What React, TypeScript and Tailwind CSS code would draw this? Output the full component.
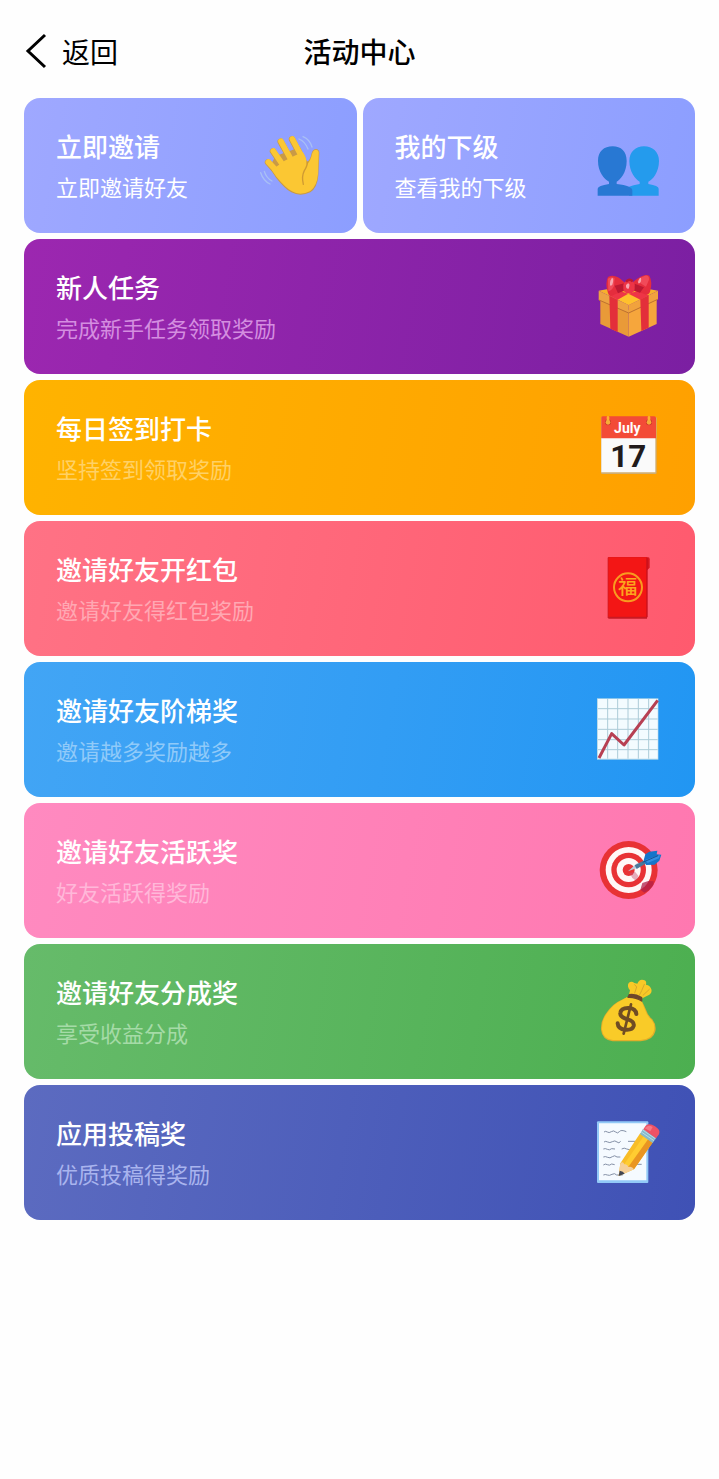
import type { ReactNode } from "react";

function Icon({ box, children }: { box: string; children: ReactNode }) {
  return (
    <svg viewBox={box} className="size-[72px] shrink-0 overflow-visible" aria-hidden="true">
      {children}
    </svg>
  );
}

const wave = (
  <Icon box="15 14 216 216">
    <g fill="none" stroke="#a9c0f5" strokeWidth="4" strokeLinecap="round">
      <path d="M147 41Q165 48 174 71" />
      <path d="M159 34Q179 42 186 65" />
      <path d="M43 138Q49 158 66 167" />
      <path d="M32 142Q40 166 60 176" />
    </g>
    <g fill="none" stroke="#c99a45" strokeWidth="19" strokeLinecap="round">
      <path d="M54 111L92 153" />
      <path d="M69 78L103 128" />
      <path d="M92 49L126 110" />
      <path d="M126 42L156 98" />
    </g>
    <path
      d="M77 92L150 66L172 110Q182 102 185 83Q189 71 199 71Q209 73 208 84L205 150Q202 188 181 201Q151 215 124 201Q106 192 78 157L58 126Z"
      fill="#c99a45"
    />
    <g fill="none" stroke="#fbc733" strokeWidth="17" strokeLinecap="round">
      <path d="M55 110L92 150" />
      <path d="M70 77L106 130" />
      <path d="M93 48L128 112" />
      <path d="M127 41L158 99" />
    </g>
    <path
      d="M82 122L104 106L132 92L158 80Q171 98 170 118Q181 110 187 83Q190 73 199 73Q208 75 206 87L204 146Q201 182 181 197Q150 213 126 198Q108 189 79 154L65 134Z"
      fill="#fbc733"
    />
    <g fill="none" stroke="#cf9a32" strokeWidth="4" strokeLinecap="round">
      <path d="M172 110Q173 120 163 136Q154 153 160 177" />
    </g>
  </Icon>
);

const people = (
  <Icon box="12 -2 216 216">
    <path
      d="M165 47C190 47 210 63 210 91C210 125 190 148 178 153V160Q209 165 209 174V195H120V168Q132 163 152 160V153C138 145 121 122 121 91C121 64 140 47 165 47Z"
      fill="#249bed"
    />
    <path
      d="M71 47C96 47 113 62 113 91C113 126 94 147 83 153V160Q130 165 130 180V195H26V174Q27 165 60 160V153C46 146 27 124 27 91C27 62 45 47 71 47Z"
      fill="#2878d3"
    />
  </Icon>
);

const gift = (
  <Icon box="12 17 216 216">
    <path d="M34 100L119 134V214L34 176Z" fill="#e99a38" />
    <path d="M119 134L203 100V176L119 214Z" fill="#f6a63c" />
    <path d="M29 76L118 60L207 76L119 119Z" fill="#f7b12c" />
    <path d="M86 102L119 87L154 102L119 119Z" fill="#ffc02d" />
    <path d="M29 76L119 119V143L29 104Z" fill="#eda343" />
    <path d="M119 119L207 76V102L119 143Z" fill="#f1a23d" />
    <path d="M30 104L119 143L206 102" fill="none" stroke="#bd7130" strokeWidth="3" />
    <path d="M61 91L86 103V200L64 190Z" fill="#e32f3a" />
    <path d="M154 102L179 90V187L157 197Z" fill="#e32f3a" />
    <path d="M61 91L91 76L117 85L86 103Z" fill="#ee3546" />
    <path d="M119 85L148 76L180 90L154 103Z" fill="#ee3546" />
    <path
      d="M105 50Q78 23 57 35Q47 55 57 83Q60 98 78 87L111 75ZM133 49Q165 22 181 31Q192 51 183 80Q177 94 160 84L130 75Z"
      fill="#e52d3d"
    />
    <path d="M77 61L106 54L107 75L87 84ZM137 55L165 66L153 82L132 75Z" fill="#bd1932" />
    <path
      d="M57 40Q65 32 77 38L75 62Q68 77 58 78ZM168 31Q181 29 180 43L171 64L145 48Q149 38 168 31Z"
      fill="#f14a59"
    />
    <rect x="103" y="46" width="34" height="38" rx="14" fill="#ed3547" />
    <path d="M111 49Q121 38 131 48" fill="none" stroke="#bd1932" strokeWidth="7" />
    <path d="M69 37Q76 39 70 58Q60 68 64 46ZM151 40Q158 31 156 48Q149 60 147 50ZM117 54Q125 55 119 70Q110 72 111 59Z" fill="#f7a5af" />
  </Icon>
);

const calendar = (
  <Icon box="12 20 216 216">
    <rect x="36" y="35" width="167" height="171" rx="4" fill="#cfae73" />
    <path d="M37 98H199V201H37Z" fill="#fafafa" />
    <path d="M37 37Q37 33 42 33H196Q201 33 201 38V99H37Z" fill="#f34b37" />
    <circle cx="57" cy="51" r="9" fill="#c93629" />
    <circle cx="180" cy="51" r="9" fill="#c93629" />
    <path d="M57 51V36M180 51V36" stroke="#ffb22e" strokeWidth="8" strokeLinecap="round" />
    <circle cx="57" cy="51" r="7" fill="#f7ac38" />
    <circle cx="180" cy="51" r="7" fill="#f7ac38" />
    <text x="115" y="82" textAnchor="middle" className="fill-white font-[Roboto] text-[42px] font-bold">
      July
    </text>
    <text x="118" y="185" textAnchor="middle" className="fill-[#211b1b] font-[Roboto] text-[94px] font-bold">
      17
    </text>
  </Icon>
);

const envelope = (
  <Icon box="12 14 216 216">
    <path d="M168 27H178Q182 27 182 33V58L175 65H168Z" fill="#d81820" />
    <path d="M56 29Q56 26 60 26H174V211H60Q56 211 56 207Z" fill="#c91923" />
    <path d="M58 27H174V205H58Z" fill="#f31615" />
    <path d="M174 28V207" stroke="#c80f1c" strokeWidth="4" />
    <circle cx="117" cy="117" r="42" fill="none" stroke="#f89b20" strokeWidth="6" />
    <text x="116" y="137" textAnchor="middle" className="fill-[#fca51d] font-['Noto_Sans_CJK_SC'] text-[58px] font-medium">
      福
    </text>
  </Icon>
);

const chart = (
  <Icon box="12 11 216 216">
    <rect x="24" y="24" width="184" height="184" fill="#bddbe8" />
    <rect x="27" y="26" width="179" height="179" fill="#f3fbff" />
    <path
      d="M56 26V205M86 26V205M117 26V205M148 26V205M179 26V205M27 55H206M27 86H206M27 117H206M27 148H206M27 178H206"
      stroke="#accbd8"
      strokeWidth="3"
      fill="none"
    />
    <path d="M30 203L68 130L105 164L206 30" fill="none" stroke="#b74053" strokeWidth="9" strokeLinejoin="round" />
  </Icon>
);

const target = (
  <Icon box="12 14 216 216">
    <circle cx="119" cy="119" r="87" fill="#e83235" />
    <circle cx="119" cy="119" r="69" fill="#fff7f7" />
    <circle cx="119" cy="119" r="52" fill="#e83235" />
    <circle cx="119" cy="119" r="36" fill="#fff7f7" />
    <circle cx="119" cy="119" r="18" fill="#e83235" />
    <path d="M122 128L138 124L148 136L142 152L130 143Z" fill="#c85070" opacity=".45" />
    <path d="M160 158L178 152L194 153L193 164Q181 182 166 187L154 178Z" fill="#b01f48" opacity=".75" />
    <path d="M117 123L145 98L154 109Z" fill="#bdcbdc" />
    <path d="M137 105L168 89L174 97L143 116Z" fill="#4a789b" />
    <path d="M164 90L169 72L181 64L205 61L203 72L217 73L211 91L197 103L171 104Z" fill="#1675ca" />
    <path d="M168 89L213 74L210 84L176 98Z" fill="#348fe3" />
    <path d="M161 96L207 76" stroke="#1c5493" strokeWidth="3" />
  </Icon>
);

const bag = (
  <Icon box="12 17 216 216">
    <path
      d="M119 76L123 60Q113 48 119 38Q127 30 136 38L145 40Q151 25 164 29Q174 31 171 43Q184 45 187 57Q190 67 181 73L166 81L155 87Z"
      fill="#f9c927"
    />
    <path d="M137 43L143 50L137 68M166 42L158 61L151 75M181 57L162 75" fill="none" stroke="#d9a82a" strokeWidth="3" strokeLinecap="round" />
    <path
      d="M113 81Q139 76 158 91Q165 103 171 118Q177 137 190 147Q203 164 199 183Q193 211 155 213H71Q39 208 36 178Q34 152 52 128Q72 99 97 89Z"
      fill="#e2ae2a"
    />
    <path
      d="M114 81Q140 76 157 91L168 118Q174 137 188 149Q199 163 195 181Q191 205 155 209H72Q42 205 39 178Q38 149 55 127Q76 99 98 90Z"
      fill="#f9cb28"
    />
    <path d="M121 73Q139 70 158 82V92Q140 80 117 81Z" fill="#6e472c" stroke="#6e472c" strokeWidth="4" strokeLinejoin="round" />
    <g fill="none" stroke="#6f4c24" strokeWidth="12" strokeLinecap="round" strokeLinejoin="round">
      <path d="M142 131Q140 114 120 113Q96 112 94 128Q92 140 116 147Q137 153 134 167Q130 180 109 178Q87 176 86 159" />
      <path d="M126 102L104 190" strokeWidth="8" />
    </g>
  </Icon>
);

const memo = (
  <Icon box="12 14 216 216">
    <rect x="24" y="27" width="154" height="185" rx="3" fill="#92c9f7" />
    <path d="M30 33H172V204H30Z" fill="#f5faff" />
    <path
      d="M45 59Q50 55 55 59T67 58T80 59T91 58T112 58M45 89Q50 85 56 89T70 88T84 89T95 87M117 87H145M43 110Q49 107 55 111T68 109L78 110M98 110Q106 105 113 110T132 108M43 134Q49 131 56 135T70 133T84 134H94M43 158Q49 153 55 157T68 155L77 157M139 156H158M43 188Q49 185 55 188T69 186T83 188H101"
      fill="none"
      stroke="#8490a6"
      strokeWidth="3"
    />
    <path d="M89 191L94 153L154 62L192 89L135 171Z" fill="#f8bd27" />
    <path d="M104 158L165 70L178 80L118 164Z" fill="#ffcc31" />
    <path d="M118 164L178 80L192 89L135 171Z" fill="#e99522" />
    <path d="M89 191L94 153Q102 146 106 156Q115 154 118 164Q129 160 135 171Z" fill="#f5cf99" />
    <path d="M89 191L92 175Q103 176 107 184Z" fill="#414552" />
    <path d="M153 65L162 50L202 76L191 92Z" fill="#86bacb" />
    <path d="M157 59L195 85M161 53L199 79" stroke="#b7dce7" strokeWidth="3" />
    <path d="M163 51L170 40Q181 31 198 42Q216 53 210 66L201 78Z" fill="#ee5265" />
    <path d="M171 45Q178 36 191 44L184 57L167 48Z" fill="#f77886" />
  </Icon>
);

type Entry = { title: string; note: string; tone: string; noteTone: string; icon: ReactNode };

const shortcuts: Entry[] = [
  { title: "立即邀请", note: "立即邀请好友", tone: "from-[#9fa8ff] to-[#8c9eff]", noteTone: "text-white", icon: wave },
  { title: "我的下级", note: "查看我的下级", tone: "from-[#9fa8ff] to-[#8c9eff]", noteTone: "text-white", icon: people },
];

const activities: Entry[] = [
  { title: "新人任务", note: "完成新手任务领取奖励", tone: "from-[#9c27b0] to-[#7b1fa2]", noteTone: "text-[#d48ee0]", icon: gift },
  { title: "每日签到打卡", note: "坚持签到领取奖励", tone: "from-[#ffb300] to-[#ffa000]", noteTone: "text-[#ffd166]", icon: calendar },
  { title: "邀请好友开红包", note: "邀请好友得红包奖励", tone: "from-[#ff7285] to-[#ff5a6e]", noteTone: "text-[#ffa8b3]", icon: envelope },
  { title: "邀请好友阶梯奖", note: "邀请越多奖励越多", tone: "from-[#42a5f5] to-[#2196f3]", noteTone: "text-[#90caf9]", icon: chart },
  { title: "邀请好友活跃奖", note: "好友活跃得奖励", tone: "from-[#ff8ac0] to-[#ff78b0]", noteTone: "text-[#ffb8d9]", icon: target },
  { title: "邀请好友分成奖", note: "享受收益分成", tone: "from-[#66bb6a] to-[#4caf50]", noteTone: "text-[#a5dba7]", icon: bag },
  { title: "应用投稿奖", note: "优质投稿得奖励", tone: "from-[#5c6bc0] to-[#3f51b5]", noteTone: "text-[#a9b4ee]", icon: memo },
];

function Card({ title, note, tone, noteTone, icon }: Entry) {
  return (
    <button
      type="button"
      className={`flex w-full items-center justify-between rounded-2xl bg-linear-100 py-[30px] pr-[30px] pl-8 text-left ${tone}`}
    >
      <span className="flex flex-col gap-[7px] pb-0.5">
        <span className="text-[26px] leading-9 font-medium text-white">{title}</span>
        <span className={`text-[22px] leading-[30px] ${noteTone}`}>{note}</span>
      </span>
      {icon}
    </button>
  );
}

export default function App() {
  return (
    <div className="min-h-screen bg-[#fefefe] font-['Noto_Sans_CJK_SC',sans-serif] text-black">
      <header className="grid grid-cols-[1fr_auto_1fr] items-center px-6 pt-[31px] pb-[27px]">
        <button type="button" className="flex items-center gap-3.5 justify-self-start text-[28px] leading-10">
          <svg viewBox="0 0 24 36" className="h-9 w-6" fill="none" stroke="currentColor" strokeWidth="3" aria-hidden="true">
            <path d="M21 2L4 18L21 34" />
          </svg>
          返回
        </button>
        <h1 className="text-[28px] leading-10 font-medium">活动中心</h1>
      </header>
      <main className="flex flex-col gap-1.5 px-6 pb-8">
        <div className="grid grid-cols-2 gap-1.5">
          {shortcuts.map((entry) => (
            <Card key={entry.title} {...entry} />
          ))}
        </div>
        {activities.map((entry) => (
          <Card key={entry.title} {...entry} />
        ))}
      </main>
    </div>
  );
}
